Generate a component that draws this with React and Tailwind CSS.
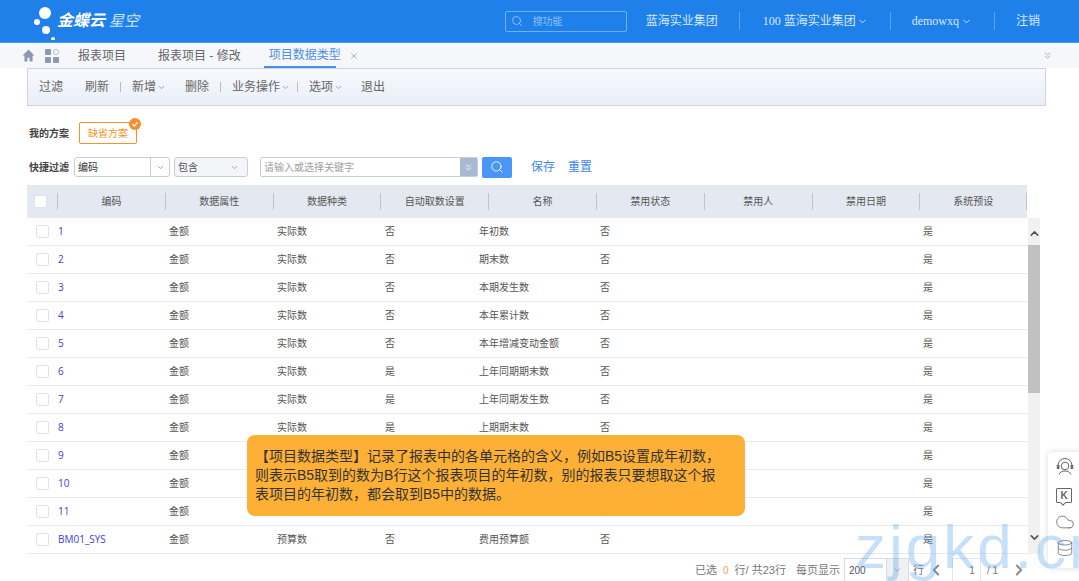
import { ChevronDown, ChevronLeft, ChevronRight, ChevronUp, ChevronsDown, Cloud, Database, Search, X } from "lucide-react";

const cjk = "font-['Liberation_Sans','Noto_Sans_CJK_SC',sans-serif]";

const rows = [
  ["1", "否", "年初数"],
  ["2", "否", "期末数"],
  ["3", "否", "本期发生数"],
  ["4", "否", "本年累计数"],
  ["5", "否", "本年增减变动金额"],
  ["6", "是", "上年同期期末数"],
  ["7", "是", "上年同期发生数"],
  ["8", "是", "上期期末数"],
  ["9", "", ""],
  ["10", "", ""],
  ["11", "", ""],
  ["BM01_SYS", "否", "费用预算额"],
];

const columns = ["编码", "数据属性", "数据种类", "自动取数设置", "名称", "禁用状态", "禁用人", "禁用日期", "系统预设"];

const Logo = () => (
  <div className="flex items-center ml-[33px] relative h-full">
    <svg width="26" height="34" viewBox="0 0 26 34" className="mt-[4px]">
      <circle cx="12" cy="7" r="6" fill="#fff" />
      <circle cx="4" cy="16" r="3" fill="#fff" />
      <circle cx="13" cy="24" r="4" fill="#fff" />
      <circle cx="20" cy="33" r="2" fill="#fff" />
    </svg>
    <span className="ml-[-2px] text-[16px] font-bold italic text-white">金蝶云</span>
    <span className="ml-[4px] text-[15px] italic text-[#cfe4fb]">星空</span>
  </div>
);

const Header = () => (
  <div className="h-[43px] bg-[#2080ea] flex items-center text-white text-[12px] border-b border-[#4b9af0]">
    <Logo />
    <div className="ml-auto w-[122px] h-[21px] border border-[#6fb2f7] rounded-[2px] flex items-center pl-[5px] gap-[10px]">
      <Search size={12} strokeWidth={1.5} className="text-[#a9d1fa]" />
      <span className="text-[10px] text-[#8fc0f5]">搜功能</span>
    </div>
    <span className="ml-[19px] text-[#d5e8fc]">蓝海实业集团</span>
    <div className="ml-[21px] w-px h-[18px] bg-[#5ca4f2]" />
    <span className="ml-[23px] flex items-center text-[#d5e8fc]">
      <span className="font-['Liberation_Serif','Noto_Sans_CJK_SC',serif] text-[12px]">100 蓝海实业集团</span>
      <ChevronDown size={11} className="ml-[1px]" />
    </span>
    <div className="ml-[22px] w-px h-[18px] bg-[#5ca4f2]" />
    <span className="ml-[21px] flex items-center text-[#d5e8fc]">
      <span className="font-['Liberation_Serif',serif] text-[12px]">demowxq</span>
      <ChevronDown size={11} className="ml-[2px]" />
    </span>
    <div className="ml-[22px] w-px h-[18px] bg-[#5ca4f2]" />
    <span className="ml-[21px] mr-[39px] text-[#d5e8fc]">注销</span>
  </div>
);

const Tabs = () => (
  <div className="h-[25px] bg-[#f6f7fb] flex items-center text-[12px] text-[#666] pl-[22px]">
    <svg width="13" height="13" viewBox="0 0 24 24" fill="#8d99ae">
      <path d="M12 1 1 12h3.5v11h5.5v-7h4v7h5.5V12H23z" />
    </svg>
    <svg width="14" height="14" viewBox="0 0 14 14" className="ml-[10px]">
      <rect x="0" y="0" width="6" height="6" rx="1" fill="#8d99ae" />
      <circle cx="11" cy="3" r="2.6" fill="none" stroke="#a9b3c4" strokeWidth="0.8" />
      <rect x="0" y="8" width="6" height="6" rx="1" fill="#8d99ae" />
      <rect x="8" y="8" width="6" height="6" rx="1" fill="#8d99ae" />
    </svg>
    <span className="ml-[19px]">报表项目</span>
    <span className="ml-[32px]">报表项目 - 修改</span>
    <div className="ml-[23px] w-[72px] h-full flex items-center justify-center border-b-2 border-[#4d8fe8] text-[#4d8fe8] pl-[10px] whitespace-nowrap">
      项目数据类型
    </div>
    <X size={10} strokeWidth={1.5} className="ml-[14px] -translate-x-[1px] text-[#888]" />
    <ChevronsDown size={11} className="ml-auto mr-[26px] text-[#a0a8b4]" />
  </div>
);

const ToolItem = ({ label, caret, className }) => (
  <span className={`flex items-center ${className}`}>
    {label}
    {caret && <ChevronDown size={9} className="ml-[1px] text-[#888]" />}
  </span>
);

const Toolbar = () => (
  <div className="mx-[27px] w-[1019px] h-[38px] border border-[#cfd3da] bg-gradient-to-b from-[#f8f9fc] to-[#e9eef8] flex items-center text-[12px] text-[#666] pl-[11px]">
    <ToolItem label="过滤" />
    <ToolItem label="刷新" className="ml-[22px]" />
    <span className="ml-[11px] w-px h-[10px] bg-[#bbb]" />
    <ToolItem label="新增" caret className="ml-[11px]" />
    <ToolItem label="删除" className="ml-[19px]" />
    <span className="ml-[11px] w-px h-[10px] bg-[#bbb]" />
    <ToolItem label="业务操作" caret className="ml-[11px]" />
    <span className="ml-[7px] w-px h-[10px] bg-[#bbb]" />
    <ToolItem label="选项" caret className="ml-[11px]" />
    <ToolItem label="退出" className="ml-[18px]" />
  </div>
);

const Filters = () => (
  <div className="pl-[29px]">
    <div className="h-[51px] flex items-center pt-[1px] mt-[0px]">
      <span className="text-[10px] font-bold text-[#444] w-[50px] mt-[2px]">我的方案</span>
      <div className="relative mt-[2px] w-[58px] h-[22px] border border-[#f5912c] rounded-[2px] flex items-center justify-center text-[10px] text-[#f5912c]">
        缺省方案
        <div className="absolute -top-[5px] -right-[5px] w-[12px] h-[12px] rounded-full bg-[#f5912c] flex items-center justify-center">
          <svg width="8" height="8" viewBox="0 0 8 8" fill="none" stroke="#fff" strokeWidth="1.2">
            <path d="M1.5 4 3.4 6 6.6 2.2" />
          </svg>
        </div>
      </div>
    </div>
    <div className="mt-[0px] h-[20px] flex items-center">
      <span className="text-[10px] font-bold text-[#444] w-[45px]">快捷过滤</span>
      <div className="w-[96px] h-[20px] border border-[#c5cfdc] rounded-[3px] flex items-center text-[10px] text-[#333] pl-[3px]">
        <span className="flex-1">编码</span>
        <span className="w-[19px] h-full border-l border-[#c5cfdc] flex items-center justify-center">
          <ChevronDown size={9} className="text-[#888]" />
        </span>
      </div>
      <div className="ml-[4px] w-[74px] h-[20px] border border-[#c5cfdc] bg-[#f3f5f8] rounded-[3px] flex items-center justify-between text-[10px] text-[#555] px-[3px]">
        <span>包含</span>
        <ChevronDown size={9} className="text-[#888] mr-[5px]" />
      </div>
      <div className="ml-[12px] w-[218px] h-[20px] border border-[#c5cfdc] rounded-[2px] flex items-center justify-between text-[10px] text-[#a0a0a0] pl-[3px]">
        <span>请输入或选择关键字</span>
        <span className="w-[17px] h-full bg-[#a8b8d4] flex items-center justify-center">
          <ChevronsDown size={11} className="text-white" />
        </span>
      </div>
      <div className="ml-[4px] w-[30px] h-[21px] bg-[#4a96f5] rounded-[2px] flex items-center justify-center">
        <Search size={14} strokeWidth={1.5} className="text-white" />
      </div>
      <span className="ml-[19px] text-[12px] text-[#3f87e8]">保存</span>
      <span className="ml-[13px] text-[12px] text-[#3f87e8]">重置</span>
    </div>
  </div>
);

const Checkbox = ({ className }) => (
  <span className={`block w-[13px] h-[13px] rounded-[2px] border border-[#dfe2e8] bg-white ${className}`} />
);

const TableHead = () => (
  <div className="w-[1000px] h-[33px] bg-[#e4e9f1] grid grid-cols-[30px_repeat(9,107.8px)] items-center text-[10px] text-[#555]">
    <Checkbox className="ml-[7px]" />
    {columns.map((c, i) => (
      <div
        key={c}
        className={`h-[17px] border-l border-[#bcc4d0] flex items-center justify-center ${i === 8 ? "border-r" : ""}`}
      >
        {c}
      </div>
    ))}
  </div>
);

const Row = ({ code, auto, name }) => (
  <div className="h-[28px] border-b border-[#e8eaee] grid grid-cols-[31px_111px_108px_108px_94px_121px_323px_1fr] items-center text-[10px] text-[#555]">
    <Checkbox className="ml-[9px]" />
    <span className="text-[#3d3dd8] font-['Open_Sans',sans-serif]">{code}</span>
    <span>金额</span>
    <span>{code === "BM01_SYS" ? "预算数" : "实际数"}</span>
    <span>{auto}</span>
    <span>{name}</span>
    <span>否</span>
    <span>是</span>
  </div>
);

const Scrollbar = () => (
  <div className="w-[12px] h-[336px] bg-[#f1f1f1] flex flex-col items-center">
    <ChevronUp size={13} strokeWidth={3} className="mt-[9px] text-[#555]" />
    <div className="w-full h-[148px] mt-[5px] bg-[#c1c1c1]" />
    <ChevronDown size={13} strokeWidth={3} className="mt-auto mb-[10px] text-[#555]" />
  </div>
);

const Pagination = () => (
  <div className="h-[27px] flex items-center text-[11px] text-[#777] pl-[695px] pt-[7px] whitespace-nowrap">
    <span>已选</span>
    <span className="ml-[6px] text-[#f5a04a] text-[10px]">0</span>
    <span className="ml-[6px]">行/ 共23行</span>
    <span className="ml-[10px]">每页显示</span>
    <div className="ml-[4px] w-[65px] h-[24px] border border-[#d8dbe0] flex items-center text-[10px] text-[#555] pl-[4px]">
      <span className="flex-1">200</span>
      <span className="w-[22px] h-full bg-[#f0f1f3] border-l border-[#d8dbe0] flex items-center justify-center">
        <ChevronDown size={10} className="text-[#999]" />
      </span>
    </div>
    <span className="ml-[4px]">行</span>
    <ChevronLeft size={18} strokeWidth={2.5} className="ml-[3px] text-[#888]" />
    <div className="ml-[7px] w-[29px] h-[24px] border border-[#e4e6ea] flex items-center justify-end pr-[5px] text-[10px]">1</div>
    <span className="ml-[6px] text-[10px]">/ 1</span>
    <ChevronRight size={18} strokeWidth={2.5} className="ml-[12px] text-[#888]" />
  </div>
);

const SideTools = () => (
  <div className="absolute left-[1048px] top-[452px] w-[40px] h-[116px] bg-white shadow-[0_0_6px_rgba(0,0,0,0.15)] rounded-l-[4px] flex flex-col pl-[8px] text-[#666]">
    <svg width="18" height="18" viewBox="0 0 18 18" fill="none" stroke="#666" strokeWidth="1" className="mt-[6px]">
      <path d="M2 9V7.5a7 7 0 0 1 14 0V9" />
      <circle cx="9" cy="8" r="3.8" />
      <path d="M3 16.5c1-2.5 3-3.5 6-3.5s5 1 6 3.5" />
      <rect x="1.3" y="7.5" width="1.6" height="3" fill="#666" />
      <rect x="15.1" y="7.5" width="1.6" height="3" fill="#666" />
    </svg>
    <div className="relative mt-[12px] w-[16px] h-[15px] border border-[#666] rounded-[1px] flex items-center justify-center text-[10px] font-bold font-['Liberation_Sans',sans-serif]">
      K
      <span className="absolute -bottom-[3px] left-[4px] w-[4px] h-[4px] bg-white border-b border-r border-[#666] rotate-45" />
    </div>
    <Cloud size={20} strokeWidth={1} className="mt-[9px] -ml-[1px]" />
    <Database size={18} strokeWidth={1} className="mt-[7px]" />
  </div>
);

export default function App() {
  return (
    <div className={`relative w-[1079px] h-[581px] overflow-hidden bg-white ${cjk}`}>
      <Header />
      <Tabs />
      <Toolbar />
      <Filters />
      <div className="ml-[27px] mt-[8px]">
        <TableHead />
        <div className="flex items-start">
          <div className="w-[1001px]">
            {rows.map((r) => (
              <Row key={r[0]} code={r[0]} auto={r[1]} name={r[2]} />
            ))}
          </div>
          <Scrollbar />
        </div>
      </div>
      <div className="-mt-[1px]">
        <Pagination />
      </div>

      <div className="absolute left-[247px] top-[435px] w-[498px] h-[81px] bg-[#fdb035] rounded-[8px] pt-[12px] pl-[8px] text-[14px] leading-[19px] text-[#333] whitespace-nowrap">
        <div>【项目数据类型】记录了报表中的各单元格的含义，例如B5设置成年初数，</div>
        <div>则表示B5取到的数为B行这个报表项目的年初数，别的报表只要想取这个报</div>
        <div>表项目的年初数，都会取到B5中的数据。</div>
      </div>

      <SideTools />

      <div className="absolute left-[855px] top-[503px] text-[62px] leading-[88px] tracking-[3px] text-[#5aa5ec]/35 font-['Liberation_Sans',sans-serif] whitespace-nowrap pointer-events-none">
        zjgkd.cn
      </div>
    </div>
  );
}
